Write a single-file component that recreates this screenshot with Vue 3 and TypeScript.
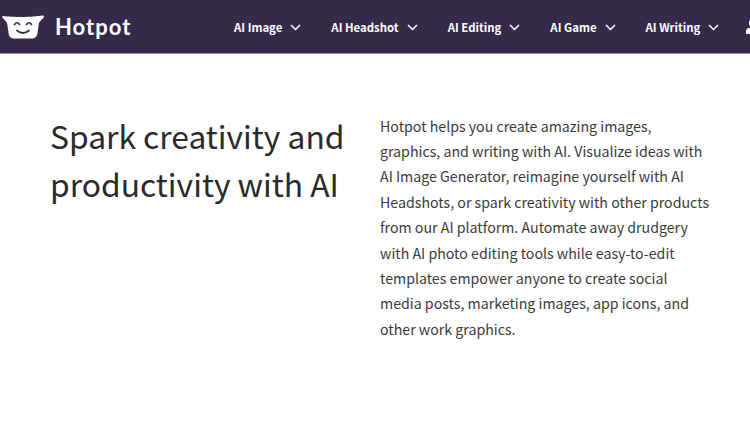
<script setup lang="ts">
const navItems: string[] = ['AI Image', 'AI Headshot', 'AI Editing', 'AI Game', 'AI Writing']
</script>

<template>
  <div class="page">
    <header class="bar">
      <div class="brand">
        <svg class="logo" width="42" height="24" viewBox="0 0 42 24">
          <path d="M1.500 1 C10 2.400 32 2.400 40.500 0.600 C42 0.400 42.300 1.800 41.500 2.800 L38 6.500 C37 7.500 36.800 8.500 36.600 10 L35.500 18 C35 21.800 33 23.500 29 23.500 L13 23.500 C9 23.500 7 21.800 6.500 18 L5.400 10 C5.200 8.500 5 7.500 4 6.500 L0.500 2.800 C-0.300 1.800 0 0.800 1.500 1 Z" fill="#fff"/>
          <path d="M12.500 9.500 Q15 6 17.500 9.500 M24.500 9.500 Q27 6 29.500 9.500 M15 15.500 Q21 20.500 27 15.500" fill="none" stroke="#362a4a" stroke-width="1.700" stroke-linecap="round"/>
        </svg>
        <span class="name">Hotpot</span>
      </div>
      <nav class="nav">
        <a v-for="item in navItems" :key="item" class="link">
          <span>{{ item }}</span>
          <svg class="chev" width="11" height="7" viewBox="0 0 11 7"><path d="M1 1 L5.500 5.500 L10 1" fill="none" stroke="#fff" stroke-width="1.500"/></svg>
        </a>
      </nav>
      <svg class="user" width="14" height="15" viewBox="0 0 14 15"><circle cx="7" cy="4" r="4" fill="#fff"/><path d="M0 15 V12 C0 9.500 3 8.500 7 8.500 S14 9.500 14 12 V15 Z" fill="#fff"/></svg>
    </header>
    <main class="hero">
      <h1 class="title">Spark creativity and productivity with AI</h1>
      <p class="copy">Hotpot helps you create amazing images, graphics, and writing with AI. Visualize ideas with AI Image Generator, reimagine yourself with AI Headshots, or spark creativity with other products from our AI platform. Automate away drudgery with AI photo editing tools while easy-to-edit templates empower anyone to create social media posts, marketing images, app icons, and other work graphics.</p>
    </main>
  </div>
</template>

<style scoped>
.page {
  width: 750px;
  height: 430px;
  overflow: hidden;
  background: #fff;
  font-family: "Noto Sans CJK SC", "Noto Sans", sans-serif;
}
.bar {
  height: 53px;
  background: #362a4a;
  border-bottom: 1px solid #8d879b;
  display: flex;
  align-items: center;
  padding-left: 2px;
  white-space: nowrap;
}
.brand {
  display: flex;
  align-items: center;
  gap: 11px;
  width: 232px;
  flex: none;
}
.logo { flex: none; }
.name {
  color: #fff;
  font-family: "Lato", sans-serif;
  font-size: 22px;
  font-weight: 700;
  letter-spacing: 1px;
}
.nav {
  display: flex;
  gap: 30px;
  flex: none;
}
.link {
  display: flex;
  align-items: center;
  gap: 8px;
  color: #fff;
  font-size: 11.4px;
  font-weight: 700;
}
.chev { margin-top: 1px; }
.user { flex: none; margin-left: 27px; }
.hero {
  display: flex;
  padding: 57px 0 0 50px;
}
.title {
  width: 330px;
  margin: 0;
  flex: none;
  font-size: 31.8px;
  line-height: 48px;
  font-weight: 400;
  color: #2a2a2a;
}
.copy {
  width: 330px;
  margin: 2.600px 0 0;
  font-size: 14.2px;
  line-height: 25.4px;
  color: #3a3a3a;
}
</style>
